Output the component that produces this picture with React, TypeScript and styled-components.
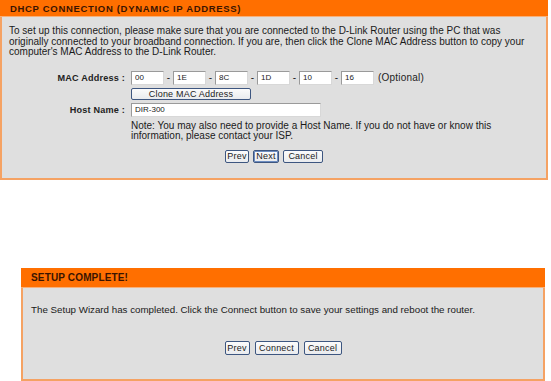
import React from "react";
import styled, { createGlobalStyle } from "styled-components";

const Global = createGlobalStyle`
  html, body { margin: 0; padding: 0; background: #ffffff; }
  body { font-family: "Liberation Sans", Arial, sans-serif; color: #111; }
`;

const Page = styled.div`
  width: 551px;
  height: 381px;
  overflow: hidden;
  display: flex;
  flex-direction: column;
`;

const Panel = styled.section<{ $width: number; $inset: number; $top: number }>`
  box-sizing: border-box;
  width: ${(p) => p.$width}px;
  margin-left: ${(p) => p.$inset}px;
  margin-top: ${(p) => p.$top}px;
  background: #dfdfdf;
  border: 2px solid #f5a263;
  border-top: none;
  display: flex;
  flex-direction: column;
`;

const Header = styled.h2<{ $height: number; $size: number; $spacing: number }>`
  margin: 0 -2px;
  height: ${(p) => p.$height}px;
  background: #ff6f00;
  border-bottom: 1px solid #f7b07a;
  box-sizing: border-box;
  display: flex;
  align-items: center;
  padding-left: 10px;
  font-size: ${(p) => p.$size}px;
  font-weight: bold;
  letter-spacing: ${(p) => p.$spacing}px;
  color: #3a1400;
`;

const Body = styled.div<{ $pad: string }>`
  padding: ${(p) => p.$pad};
  display: flex;
  flex-direction: column;
`;

const Para = styled.p<{ $size: number }>`
  margin: 0;
  font-size: ${(p) => p.$size}px;
  line-height: 10.5px;
  color: #1a1a1a;
  white-space: nowrap;
`;

const Form = styled.div`
  display: grid;
  grid-template-columns: 116px auto;
  column-gap: 6px;
  row-gap: 3px;
  margin-top: 13px;
  align-items: center;
`;

const Label = styled.label`
  font-size: 9.1px;
  font-weight: bold;
  text-align: right;
  color: #222;
  letter-spacing: 0.2px;
`;

const Field = styled.div`
  display: flex;
  align-items: center;
  font-size: 10px;
  color: #222;
`;

const Input = styled.input<{ $w: number }>`
  box-sizing: border-box;
  width: ${(p) => p.$w}px;
  height: 14px;
  padding: 0 3px;
  margin: 0;
  border: 1px solid #9a9a9a;
  border-right-color: #d8d8d8;
  border-bottom-color: #d8d8d8;
  background: #fff;
  font-family: "Liberation Sans", Arial, sans-serif;
  font-size: 8px;
  color: #222;
  outline: none;
`;

const Dash = styled.span`
  width: 9px;
  text-align: center;
  font-size: 10px;
`;

const Optional = styled.span`
  margin-left: 4px;
  font-size: 10px;
  letter-spacing: 0.2px;
`;

const Note = styled.p`
  grid-column: 2;
  margin: 1px 0 0;
  font-size: 10px;
  line-height: 10.5px;
  color: #1a1a1a;
  white-space: nowrap;
`;

const Actions = styled.div<{ $gap: number; $top: number }>`
  display: flex;
  justify-content: center;
  gap: ${(p) => p.$gap}px;
  margin-top: ${(p) => p.$top}px;
`;

const Button = styled.button<{ $w: number; $h: number; $primary?: boolean }>`
  box-sizing: border-box;
  width: ${(p) => p.$w}px;
  height: ${(p) => p.$h}px;
  padding: 0;
  margin: 0;
  border: 1px solid #3d5680;
  border-radius: 2px;
  background: linear-gradient(#fbfbfb, #e9ebee);
  box-shadow: ${(p) => (p.$primary ? "inset 0 0 0 1px #6c8cc0" : "none")};
  font-family: "Liberation Sans", Arial, sans-serif;
  font-size: 9px;
  color: #222;
  letter-spacing: 0.2px;
`;

const macParts = ["00", "1E", "8C", "1D", "10", "16"];

export default function App() {
  return (
    <>
      <Global />
      <Page>
        <Panel $width={548} $inset={0} $top={0}>
          <Header $height={17} $size={9.5} $spacing={0.68}>
            DHCP CONNECTION (DYNAMIC IP ADDRESS)
          </Header>
          <Body $pad="9px 7px 15px">
            <Para $size={10}>
              To set up this connection, please make sure that you are connected to the D-Link Router using the PC that was
              <br />
              originally connected to your broadband connection. If you are, then click the Clone MAC Address button to copy your
              <br />
              computer's MAC Address to the D-Link Router.
            </Para>
            <Form>
              <Label>MAC Address :</Label>
              <Field>
                {macParts.map((m, i) => (
                  <React.Fragment key={i}>
                    {i > 0 && <Dash>-</Dash>}
                    <Input $w={33} defaultValue={m} />
                  </React.Fragment>
                ))}
                <Optional>(Optional)</Optional>
              </Field>
              <span />
              <Field>
                <Button $w={120} $h={12}>Clone MAC Address</Button>
              </Field>
              <Label>Host Name :</Label>
              <Field>
                <Input $w={190} defaultValue="DIR-300" />
              </Field>
              <Note>
                Note: You may also need to provide a Host Name. If you do not have or know this
                <br />
                information, please contact your ISP.
              </Note>
            </Form>
            <Actions $gap={4} $top={8}>
              <Button $w={24} $h={13}>Prev</Button>
              <Button $w={26} $h={13} $primary>Next</Button>
              <Button $w={40} $h={13}>Cancel</Button>
            </Actions>
          </Body>
        </Panel>
        <Panel $width={524} $inset={21} $top={88}>
          <Header $height={20} $size={10} $spacing={0.15}>
            SETUP COMPLETE!
          </Header>
          <Body $pad="17px 8px 24px">
            <Para $size={9.75}>
              The Setup Wizard has completed. Click the Connect button to save your settings and reboot the router.
            </Para>
            <Actions $gap={5} $top={26}>
              <Button $w={25} $h={14}>Prev</Button>
              <Button $w={44} $h={14}>Connect</Button>
              <Button $w={38} $h={14}>Cancel</Button>
            </Actions>
          </Body>
        </Panel>
      </Page>
    </>
  );
}
